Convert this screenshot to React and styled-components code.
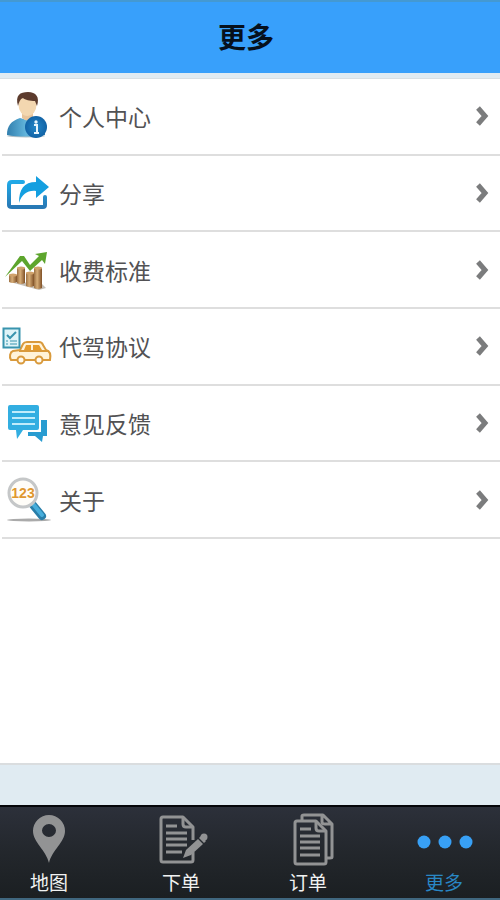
import React from "react";
import styled, { createGlobalStyle } from "styled-components";

const GlobalStyle = createGlobalStyle`
  * { box-sizing: border-box; }
  body {
    margin: 0;
    background: #e1ebf2;
    font-family: "Noto Sans CJK SC", "Noto Sans", sans-serif;
  }
`;

const Page = styled.div`
  display: flex;
  flex-direction: column;
  min-height: 100vh;
  background: #e0ebf2;
`;

const Header = styled.header`
  display: flex;
  align-items: center;
  justify-content: center;
  min-height: 73px;
  padding: 0 8px 4px 0;
  border-top: 2px solid #4499d2;
  background: #38a0fb;
`;

const Title = styled.h1`
  margin: 0;
  font-size: 28px;
  line-height: 40px;
  font-weight: 700;
  color: #06101c;
`;

const Panel = styled.main`
  flex: 1;
  margin: 5px 0 40px;
  border-top: 1px solid #d8e0e4;
  border-bottom: 2px solid #dadddf;
  background: #fff;
`;

const Menu = styled.ul`
  display: grid;
  grid-auto-rows: 1fr;
  min-height: 460px;
  margin: 0 0 0 2px;
  padding: 0;
  list-style: none;
`;

const MenuItem = styled.li`
  display: flex;
  border-bottom: 2px solid #dedede;
`;

const MenuButton = styled.button`
  flex: 1;
  display: flex;
  align-items: center;
  gap: 5px;
  padding: 0 11px 0 0;
  border: 0;
  background: none;
  font: inherit;
  font-size: 23px;
  line-height: 32px;
  color: #525254;
  text-align: left;
  cursor: pointer;
`;

const MenuLabel = styled.span`
  flex: 1;
`;

const MenuIcon = styled.svg`
  width: 52px;
  height: 52px;
`;

const Chevron = styled.svg`
  width: 14px;
  height: 22px;
  fill: none;
  stroke: #7b7c7d;
  stroke-width: 5;
`;

const TabBar = styled.nav`
  display: grid;
  grid-template-columns: 132fr 127fr 136fr 94fr;
  padding: 3px 0 4px 11px;
  border-top: 2px solid #05060a;
  border-bottom: 2px solid #40677f;
  background: linear-gradient(#2c303a, #23272c 50%, #1b1f22);
`;

const Tab = styled.button`
  display: flex;
  flex-direction: column;
  align-items: center;
  gap: 4px;
  width: 76px;
  padding: 0;
  border: 0;
  background: none;
  font: inherit;
  font-size: 19px;
  line-height: 24px;
  color: ${(p) => (p.$active ? "#2987c5" : "#f1f2f2")};
  cursor: pointer;
`;

const TabIcon = styled.svg`
  width: 60px;
  height: 56px;
  color: ${(p) => (p.$active ? "#38a0f5" : "#929394")};
`;

const PersonArt = () => (
  <>
    <defs>
      <linearGradient id="coat" x2="1">
        <stop offset="0" stopColor="#327fae" />
        <stop offset=".5" stopColor="#62b5dc" />
        <stop offset="1" stopColor="#2977ad" />
      </linearGradient>
      <radialGradient id="badge">
        <stop offset="0" stopColor="#2587c8" />
        <stop offset="1" stopColor="#1263a6" />
      </radialGradient>
    </defs>
    <ellipse cx="24" cy="46" rx="19" ry="1.500" fill="#b5c0c5" />
    <path d="M5 45C5 36 9 31 18 28l7 2 7-2c8 2 11 7 11 17-11 2-27 2-38 0Z" fill="url(#coat)" />
    <path d="M20 21h11v7q-5 5-11 0Z" fill="#e8c49b" />
    <ellipse cx="25.500" cy="15" rx="9" ry="11" fill="#f3d7b0" />
    <path d="M16 16C13 5 18 2 26 2c8 0 12 5 9 14l-2-5c-5 0-10-1-12-3-3 1-4 4-5 8Z" fill="#5c3b2d" />
    <circle cx="34" cy="37" r="11" fill="url(#badge)" />
    <circle cx="34" cy="32" r="1.700" fill="#e7f4fc" />
    <path d="M32 35h3v8m-3 0h5" fill="none" stroke="#e7f4fc" strokeWidth="2" />
  </>
);

const ShareArt = () => (
  <>
    <defs>
      <linearGradient id="tray" y2="1" x2="0">
        <stop offset="0" stopColor="#20a9e7" />
        <stop offset="1" stopColor="#2879b5" />
      </linearGradient>
    </defs>
    <path d="M21 15H10q-3 0-3 3v20q0 2 3 2h31q2 0 2-2v-8" fill="none" stroke="url(#tray)" strokeWidth="4" strokeLinecap="round" />
    <path d="M17 36C17 22 22 15 34 15V9l13 11-13 11v-7c-8-1-14 3-17 12Z" fill="#149fe0" />
  </>
);

const bars = [
  { x: 7, y: 31, h: 7 },
  { x: 15, y: 24, h: 15 },
  { x: 24, y: 29, h: 13 },
  { x: 32, y: 24, h: 20 },
];

const FeesArt = () => (
  <>
    <defs>
      <linearGradient id="coins">
        <stop offset="0" stopColor="#9b7043" />
        <stop offset=".4" stopColor="#d6ad78" />
        <stop offset="1" stopColor="#805127" />
      </linearGradient>
    </defs>
    <path d="M8 38 37 46l7-2-5-5Z" fill="#c5bfb7" />
    {bars.map((b) => (
      <g key={b.x}>
        <path d={`M${b.x} ${b.y}v${b.h}q4 2 8 0v-${b.h}Z`} fill="url(#coins)" />
        <ellipse cx={b.x + 4} cy={b.y} rx="4" ry="1.500" fill="#d0a26b" />
      </g>
    ))}
    <path d="M3 33 18 12h4l6 9 9-9-4-2 12-2-2 12-3-4-12 11-8-10Z" fill="#5da52d" />
  </>
);

const AgreementArt = () => (
  <>
    <g fill="none" stroke="#d99a3c" strokeWidth="2">
      <path d="M9 40c-2-3-1-8 2-9l7-1 3-6q1-2 4-2h12q3 0 4 3l3 5c4 1 5 5 4 10H9Z" fill="#fff3d9" />
      <path d="M17 31h29" />
      <circle cx="19" cy="40" r="3.500" fill="#fffaf0" />
      <circle cx="37" cy="40" r="3.500" fill="#fffaf0" />
    </g>
    <path d="m22 30 2-5h5v5Zm9 0v-5h6l3 5Z" fill="#e69c2b" />
    <g fill="none" stroke="#3994ae">
      <path d="M1.500 8.500h16v19h-16Z" fill="#dff4f8" strokeWidth="2" />
      <path d="m5 15 3 3 6-6" strokeWidth="2" />
      <path d="M4 21h2m2 0h7M4 24h2m2 0h7" />
    </g>
  </>
);

const FeedbackArt = () => (
  <>
    <path d="M39 23h6v16h-4l-1 6-7-6h-7v-4h13Z" fill="#289cd1" />
    <path d="M8 8h27q2 0 2 2v21q0 2-2 2H21l-6 9-1-9H8q-2 0-2-2V10q0-2 2-2Z" fill="#32aee1" />
    <path d="M10 15h23M10 21h23M10 27h23" stroke="#c0ecfb" strokeWidth="2" />
  </>
);

const AboutArt = () => (
  <>
    <ellipse cx="27" cy="46" rx="22" ry="1.500" fill="#aaa" />
    <path d="m31 31 9 11" stroke="#297ea9" strokeWidth="8" strokeLinecap="round" />
    <path d="m31 30 9 11" stroke="#46addb" strokeWidth="4" strokeLinecap="round" />
    <circle cx="21" cy="19" r="14" fill="#fffdf8" stroke="#c5c7c8" strokeWidth="3" />
    <text
      x="21"
      y="24"
      textAnchor="middle"
      fontFamily="Liberation Sans, sans-serif"
      fontSize="14"
      fontWeight="700"
      fill="#df9831"
    >
      123
    </text>
  </>
);

const MapArt = () => (
  <path
    fill="currentColor"
    fillRule="evenodd"
    d="M28 53C25 40 12 32 12 21a16 16 0 0 1 32 0c0 11-13 19-16 32Zm0-39a7 6.500 0 1 0 0 13 7 6.500 0 0 0 0-13Z"
  />
);

const OrderArt = () => (
  <g fill="none" stroke="currentColor" strokeWidth="3" strokeLinejoin="round">
    <path d="M40 30V17L30 7H10q-2 0-2 2v41q0 2 2 2h28q2 0 2-2v-8" />
    <path d="M30 8v6q0 3 3 3h6" />
    <path d="M13 16h11M13 23h21M13 29h21M13 35h21M13 42h16" />
    <path d="m30 48 3-8 12-11 5 5-12 11Z" fill="currentColor" stroke="none" />
    <path d="m46 28 2-2 5 5-2 2Z" fill="currentColor" stroke="none" />
    <circle cx="51" cy="27" r="3.500" fill="currentColor" stroke="none" />
  </g>
);

const OrdersArt = () => (
  <g fill="none" stroke="currentColor" strokeWidth="3" strokeLinejoin="round">
    <path d="M22 10V6q0-1 2-1h19l9 9v33q0 1-2 1h-3M42 6v6q0 2 3 2h6" />
    <path d="M17 11h19l10 10v31q0 2-2 2H17q-2 0-2-2V13q0-2 2-2Z" />
    <path d="M36 12v6q0 3 3 3h6M20 19h11M20 26h20M20 32h20M20 38h20M20 45h20" />
  </g>
);

const MoreArt = () => (
  <g fill="currentColor">
    <circle cx="8" cy="32" r="6.500" />
    <circle cx="29" cy="32" r="6.500" />
    <circle cx="50" cy="32" r="6.500" />
  </g>
);

const menuItems = [
  { label: "个人中心", Art: PersonArt },
  { label: "分享", Art: ShareArt },
  { label: "收费标准", Art: FeesArt },
  { label: "代驾协议", Art: AgreementArt },
  { label: "意见反馈", Art: FeedbackArt },
  { label: "关于", Art: AboutArt },
];

const tabs = [
  { label: "地图", Art: MapArt },
  { label: "下单", Art: OrderArt },
  { label: "订单", Art: OrdersArt },
  { label: "更多", Art: MoreArt, active: true },
];

export default function App() {
  return (
    <>
      <GlobalStyle />
      <Page>
        <Header>
          <Title>更多</Title>
        </Header>
        <Panel>
          <Menu>
            {menuItems.map(({ label, Art }) => (
              <MenuItem key={label}>
                <MenuButton type="button">
                  <MenuIcon viewBox="0 0 52 52" aria-hidden="true">
                    <Art />
                  </MenuIcon>
                  <MenuLabel>{label}</MenuLabel>
                  <Chevron viewBox="0 0 14 22" aria-hidden="true">
                    <path d="m3 3 7 8-7 8" />
                  </Chevron>
                </MenuButton>
              </MenuItem>
            ))}
          </Menu>
        </Panel>
        <TabBar aria-label="主导航">
          {tabs.map(({ label, Art, active }) => (
            <Tab key={label} type="button" $active={active} aria-current={active ? "page" : undefined}>
              <TabIcon viewBox="-2 0 60 56" $active={active} aria-hidden="true">
                <Art />
              </TabIcon>
              {label}
            </Tab>
          ))}
        </TabBar>
      </Page>
    </>
  );
}
